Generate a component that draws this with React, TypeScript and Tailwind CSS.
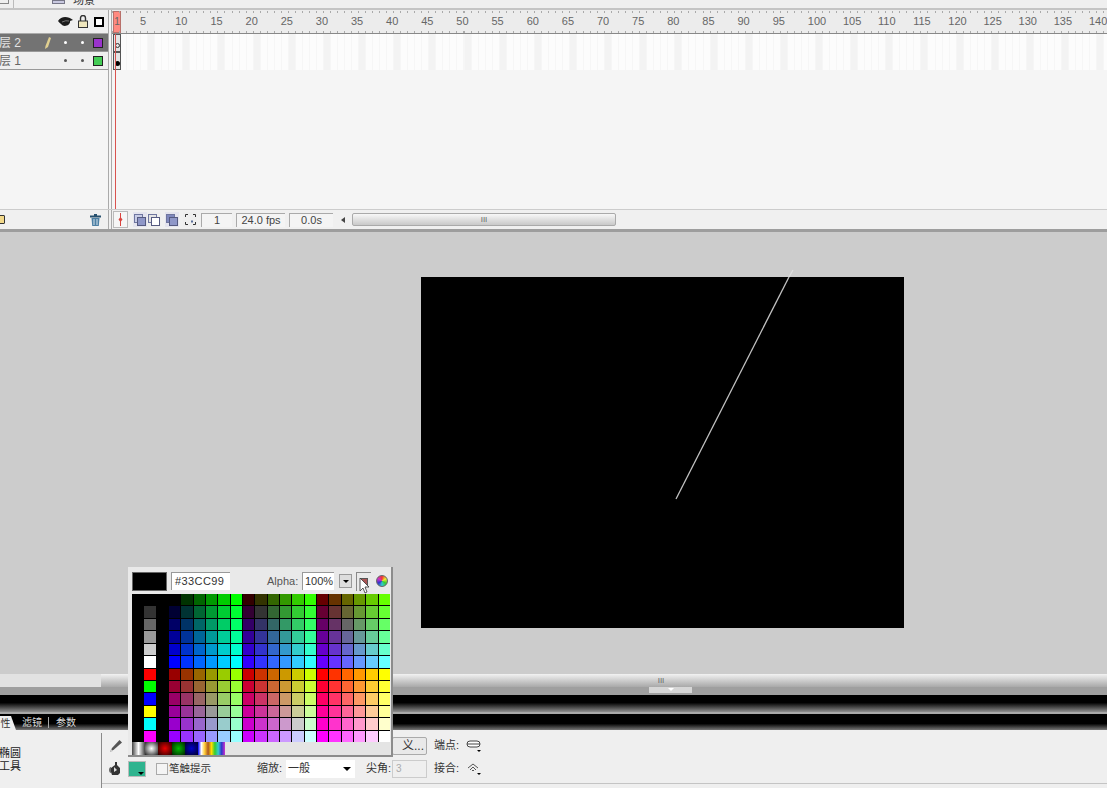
import React from 'react';

const hex = ['00', '33', '66', '99', 'CC', 'FF'];
const sideColors = ['#000000', '#333333', '#666666', '#999999', '#CCCCCC', '#FFFFFF', '#FF0000', '#00FF00', '#0000FF', '#FFFF00', '#00FFFF', '#FF00FF'];
const labels = [5, 10, 15, 20, 25, 30, 35, 40, 45, 50, 55, 60, 65, 70, 75, 80, 85, 90, 95, 100, 105, 110, 115, 120, 125, 130, 135, 140];

// web-safe palette, same order as the flash swatch panel
function swatches() {
  const cells: string[] = [];
  for (let row = 0; row < 12; row++) {
    const blue = hex[row % 6];
    cells.push('#000000', sideColors[row], '#000000');
    for (let col = 0; col < 18; col++) {
      const red = hex[Math.floor(col / 6) + (row < 6 ? 0 : 3)];
      cells.push(`#${red}${hex[col % 6]}${blue}`);
    }
  }
  return cells;
}

function Eye() {
  return (
    <svg width="15" height="10" viewBox="0 0 15 10">
      <path d="M0 4 C3 -1 10 -1 15 3 L12 4 C13 8 6 11 3 7 Q1.500 6 0 4Z" fill="#1c1c1c" />
      <path d="M4 5 Q8 3 11 4" fill="none" stroke="#8a8a8a" strokeWidth="0.8" />
    </svg>
  );
}

function Lock() {
  return (
    <svg width="10" height="13" viewBox="0 0 10 13">
      <path d="M2.500 7V3a2.500 2.500 0 0 1 5 0v4" fill="none" stroke="#333" strokeWidth="1.400" />
      <rect x="0.500" y="6" width="9" height="6.500" fill="#efe6bd" stroke="#333" />
    </svg>
  );
}

function Trash() {
  return (
    <svg width="11" height="12" viewBox="0 0 11 12">
      <rect x="0" y="1.500" width="11" height="2" fill="#26506e" />
      <rect x="4" y="0" width="3" height="2" fill="#26506e" />
      <path d="M1.500 4h8l-.7 8H2.200Z" fill="#4c7fa3" />
      <path d="M4 5v6M7 5v6" stroke="#d5e3ec" />
    </svg>
  );
}

function Onion({ back, front }: { back: string; front: string }) {
  return (
    <svg width="12" height="12" viewBox="0 0 12 12">
      <rect x="0.500" y="0.500" width="8" height="8" fill={back} stroke="#6f769f" />
      <rect x="3.500" y="3.500" width="8" height="8" fill={front} stroke="#555a80" />
    </svg>
  );
}

function TimelineHeader() {
  return (
    <div className="flex h-[24px] shrink-0">
      <div className="w-[108px] shrink-0 bg-[#efefef] flex items-center justify-end pr-[4px] border-b border-[#aaa]">
        <Eye />
        <div className="ml-[5px]">
          <Lock />
        </div>
        <div className="ml-[6px] w-[10px] h-[10px] border-2 border-black bg-white" />
      </div>
      <div className="w-[4px] shrink-0 bg-[#f5f5f5] border-x border-[#aaa]" />
      <div className="relative flex-1 bg-[#ececec] border-b border-[#888] overflow-hidden">
        <div className="absolute top-[1px] left-0 right-0 h-[2px] bg-[repeating-linear-gradient(90deg,#aaa_0,#aaa_1px,transparent_1px,transparent_7.03px)]" />
        <div className="absolute bottom-0 left-0 right-0 h-[2px] bg-[repeating-linear-gradient(90deg,#aaa_0,#aaa_1px,transparent_1px,transparent_7.03px)]" />
        <div className="flex h-full items-center text-[11px] text-[#666]">
          <div className="w-[28.1px] shrink-0 pl-[1px]">
            <div className="w-[8px] h-[22px] bg-[#ff8a80] border border-[#b8706a] text-center leading-[20px] text-[10px]">1</div>
          </div>
          {labels.map((n) => (
            <div key={n} className="w-[35.15px] shrink-0">{n}</div>
          ))}
        </div>
      </div>
    </div>
  );
}

function LayerRow({ name, color, active }: { name: string; color: string; active?: boolean }) {
  const dot = active ? 'bg-white' : 'bg-[#555]';
  return (
    <div className={`flex items-center h-[18px] border-b border-[#999] ${active ? 'bg-[#737373] text-[#e4e4e4]' : 'bg-[#efefef] text-[#666]'}`}>
      <span className="w-[46px] shrink-0 text-[12px] leading-none -ml-[1px] whitespace-nowrap">{name}</span>
      <div className="w-[10px] shrink-0">
        {active && (
          <svg width="6" height="12" viewBox="0 0 6 12">
            <path d="M4 0l2 1-3 9-3 2 .5-3Z" fill="#e0cf90" />
          </svg>
        )}
      </div>
      <span className={`ml-[9px] w-[3px] h-[3px] rounded-full ${dot}`} />
      <span className={`ml-[14px] w-[3px] h-[3px] rounded-full ${dot}`} />
      <span className="ml-[9px] w-[10px] h-[10px] border border-[#222]" style={{ backgroundColor: color }} />
    </div>
  );
}

function FrameRow({ children }: { children: React.ReactNode }) {
  return (
    <div className="flex h-[18px] bg-[repeating-linear-gradient(90deg,#f6f6f6_0,#f6f6f6_1px,transparent_1px,transparent_7.03px),repeating-linear-gradient(90deg,#f3f3f3_0,#f3f3f3_7px,#fcfcfc_7px,#fcfcfc_35.15px)]">
      <div className="w-[8px] ml-[1px] border border-[#555] bg-[#e4e4e4] flex items-end justify-center pb-[3px]">{children}</div>
    </div>
  );
}

function TimelineFooter() {
  const box = 'h-[14px] border-t border-l border-[#aaa] bg-[#f4f4f4] flex items-center justify-center text-[11px] text-[#444]';
  return (
    <div className="flex items-center h-[20px] shrink-0 bg-[#f0f0f0] border-t border-[#ccc]">
      <div className="w-[108px] shrink-0 flex items-center justify-between pr-[7px]">
        <div className="w-[6px] h-[9px] bg-[#f3d98a] border border-[#333] -ml-[1px] rounded-r-[1px]" />
        <Trash />
      </div>
      <div className="w-[4px] h-full shrink-0 border-x border-[#aaa]" />
      <div className="ml-[1px] w-[15px] h-[17px] border border-[#bbb] bg-[#f6f6f6] flex items-center justify-center">
        <svg width="5" height="13" viewBox="0 0 5 13">
          <path d="M2.500 0v13" stroke="#d9443f" />
          <path d="M2.500 4l2 2.500-2 2.500-2-2.500Z" fill="#d9443f" />
        </svg>
      </div>
      <div className="ml-[5px] w-[14px] h-[15px] bg-[#e4e4ee] flex items-center justify-center">
        <Onion back="#c9cde6" front="#8f97c8" />
      </div>
      <div className="w-[14px] h-[15px] bg-[#eee] flex items-center justify-center">
        <Onion back="#e4e4e4" front="#fff" />
      </div>
      <div className="ml-[4px] w-[14px] h-[15px] bg-[#e4e4ee] flex items-center justify-center">
        <Onion back="#7f88bd" front="#8f97c8" />
      </div>
      <div className="ml-[4px] w-[14px] h-[15px] bg-[#eee] flex items-center justify-center">
        <svg width="11" height="11" viewBox="0 0 11 11">
          <path d="M3 .5H.5V3M8 .5h2.500V3M3 10.500H.5V8M8 10.500h2.500V8" fill="none" stroke="#333" />
          <path d="M6 6.500h2v2H6Z" fill="#5a6f9a" />
        </svg>
      </div>
      <div className={`${box} ml-[4px] w-[31px]`}>1</div>
      <div className={`${box} ml-[4px] w-[49px]`}>24.0 fps</div>
      <div className={`${box} ml-[4px] w-[44px]`}>0.0s</div>
      <span className="ml-[8px] w-0 h-0 border-y-[3px] border-y-transparent border-r-[4px] border-r-[#444]" />
      <div className="ml-[7px] w-[264px] h-[13px] border border-[#aaa] rounded-[2px] bg-gradient-to-b from-[#f8f8f8] to-[#c9c9c9] flex items-center justify-center text-[8px] text-[#666] leading-none">III</div>
    </div>
  );
}

function Timeline() {
  return (
    <div className="shrink-0 h-[222px] flex flex-col bg-[#f5f5f5] border-b-[3px] border-[#9d9d9d]">
      <TimelineHeader />
      <div className="flex flex-1 relative">
        <div className="w-[108px] shrink-0">
          <LayerRow name="层 2" color="#9933cc" active />
          <LayerRow name="层 1" color="#44cc55" />
        </div>
        <div className="w-[4px] shrink-0 border-x border-[#aaa]" />
        <div className="flex-1">
          <FrameRow>
            <span className="w-[5px] h-[5px] rounded-full border border-[#333]" />
          </FrameRow>
          <FrameRow>
            <span className="w-[5px] h-[5px] rounded-full bg-black" />
          </FrameRow>
        </div>
        <div className="absolute left-[115px] top-0 bottom-0 w-px bg-[#d9534f]" />
      </div>
      <TimelineFooter />
    </div>
  );
}

function Stage() {
  return (
    <div className="relative flex-1 min-h-0 bg-[#cccccc] pl-[421px] pt-[45px]">
      <div className="w-[483px] h-[351px] bg-black" />
      <svg className="absolute left-[670px] top-[35px]" width="130" height="235" viewBox="0 0 130 235">
        {/* the stroke runs a little past the stage's top edge */}
        <line x1="123" y1="3" x2="119" y2="10" stroke="#dedede" strokeWidth="1.3" />
        <line x1="119" y1="10" x2="6" y2="232" stroke="#c2c2c2" strokeWidth="1.3" />
      </svg>
    </div>
  );
}

function StageBars() {
  return (
    <div className="shrink-0">
      <div className="flex h-[13px]">
        <div className="w-[101px] bg-[#e2e2e2]" />
        <div className="flex-1 bg-gradient-to-b from-[#f2f2f2] to-[#a9a9a9] flex items-center justify-center pl-[114px] text-[8px] text-[#666] leading-none">III</div>
      </div>
      <div className="h-[8px] bg-[#9f9f9f] flex justify-end pr-[415px]">
        <div className="w-[43px] h-[6px] bg-[#d6d6d6] flex justify-center">
          <span className="w-0 h-0 border-x-[3px] border-x-transparent border-t-[3px] border-t-white mt-[1px]" />
        </div>
      </div>
      <div className="h-[17px] bg-[linear-gradient(180deg,#000_0,#000_45%,#8f8f8f_100%)]" />
      <div className="h-[2px] bg-[#a8a8a8]" />
      <div className="flex h-[16px] bg-[linear-gradient(180deg,#000_0,#000_60%,#777_100%)] items-end text-[10px] leading-[15px] text-[#ddd]">
        <div className="w-[11px] h-[14px] bg-[#efefef] text-[#333] text-center">性</div>
        <div className="w-0 h-0 border-b-[14px] border-b-[#efefef] border-r-[5px] border-r-transparent" />
        <span className="ml-[6px]">滤镜</span>
        <span className="ml-[6px] h-[11px] w-px bg-[#aaa] mb-[2px]" />
        <span className="ml-[7px]">参数</span>
      </div>
    </div>
  );
}

function Panel() {
  return (
    <div className="h-[58px] shrink-0 bg-[#efefef] flex text-[11px] text-[#333] whitespace-nowrap">
      <div className="w-[102px] shrink-0 pt-[17px] leading-[13px] text-[#222] relative">
        <div className="-ml-[1px]">椭圆</div>
        <div className="-ml-[1px]">工具</div>
        <div className="absolute right-0 top-[3px] bottom-0 w-px bg-[#8a8a8a]" />
      </div>
      <div className="flex-1 flex flex-col relative">
        <div className="flex items-center h-[17px] mt-[7px]">
          <svg className="ml-[8px]" width="12" height="12" viewBox="0 0 12 12">
            <path d="M9.500 0l2.500 2.500-8 7-4 2.500 2-4Z" fill="#555" />
            <path d="M0 12l1-3 2 2Z" fill="#ccc" />
          </svg>
          <div className="ml-[270px] w-[35px] h-[18px] bg-[#e9e9e9] border border-[#aaa] rounded-[2px] flex items-center justify-end pr-[2px] text-[12px]">义...</div>
          <span className="ml-[7px] w-[27px]">端点:</span>
          <svg className="ml-[5px]" width="16" height="14" viewBox="0 0 16 14">
            <rect x="1" y="2" width="13" height="6" rx="3" fill="#fff" stroke="#444" />
            <path d="M1 5h13" stroke="#444" />
            <path d="M11 11h4l-2 2Z" fill="#000" />
          </svg>
        </div>
        <div className="flex items-center h-[17px] mt-[6px]">
          <svg className="ml-[7px]" width="13" height="13" viewBox="0 0 13 13">
            <path d="M6 0h2v3l3 3v5l-2 2H3l-1-3V6l4-3Z" fill="#333" />
            <path d="M0 8c0-2 1-3 2-3v6C1 11 0 10 0 8Z" fill="#666" />
            <path d="M5 5l3 3-3 2Z" fill="#ddd" />
          </svg>
          <div className="ml-[6px] w-[18px] h-[16px] bg-[#2fb48f] border border-[#bbb] relative">
            <span className="absolute right-[1px] bottom-[1px] w-0 h-0 border-x-[3px] border-x-transparent border-t-[3px] border-t-black" />
          </div>
          <div className="ml-[10px] w-[12px] h-[12px] border border-[#aaa] bg-[#f4f4f4]" />
          <span className="ml-[1px] w-[43px] text-[10.500px]">笔触提示</span>
          <span className="ml-[45px] w-[26px]">缩放:</span>
          <div className="ml-[3px] w-[69px] h-[18px] bg-white flex items-center justify-between pl-[2px] pr-[4px]">
            <span>一般</span>
            <span className="w-0 h-0 border-x-[4px] border-x-transparent border-t-[4px] border-t-black" />
          </div>
          <span className="ml-[11px] w-[25px]">尖角:</span>
          <div className="w-[35px] h-[18px] border border-[#ccc] text-[#aaa] text-[10px] pl-[3px] leading-[16px] ml-[1px]">3</div>
          <span className="ml-[7px] w-[27px]">接合:</span>
          <svg className="ml-[5px]" width="16" height="14" viewBox="0 0 16 14">
            <path d="M2 6l5-4 5 4M4 8l3-3 3 3M6 9l1-1 1 1" fill="none" stroke="#555" />
            <path d="M11 11h4l-2 2Z" fill="#000" />
          </svg>
        </div>
        <div className="absolute left-0 right-0 top-[53px] h-px bg-[#c4c4c4]" />
      </div>
    </div>
  );
}

function ColorPopup() {
  return (
    <div className="absolute left-[128px] top-[567px] w-[265px] h-[190px] bg-[#e9e9e9] border-r-2 border-b-2 border-[#8c8c8c] pl-[4px] pt-[4px] text-[11px] text-[#555]">
      <div className="flex items-center h-[20px]">
        <div className="w-[35px] h-[19px] bg-black border border-[#666]" />
        <div className="ml-[4px] w-[59px] h-[18px] bg-white border-t border-l border-[#999] pl-[3px] leading-[17px] text-[#333] tracking-[0.4px]">#33CC99</div>
        <span className="ml-[37px] w-[33px]">Alpha:</span>
        <div className="ml-[2px] w-[32px] h-[18px] bg-white border-t border-l border-[#999] pl-[2px] leading-[17px] text-[#333]">100%</div>
        <div className="ml-[5px] w-[13px] h-[14px] bg-[#ddd] border border-[#999] flex items-center justify-center">
          <span className="w-0 h-0 border-x-[3px] border-x-transparent border-t-[3px] border-t-black" />
        </div>
        <div className="ml-[4px] w-[15px] h-[19px] border-t border-l border-[#888] flex items-center justify-center">
          <span className="w-[8px] h-[8px] bg-[#a55] border border-[#555]" />
        </div>
        <span className="ml-[5px] w-[12px] h-[12px] rounded-full bg-[conic-gradient(#e33,#ee3,#3c3,#3cc,#33c,#c3c,#e33)] border border-[#666]" />
      </div>
      <div className="mt-[3px] w-[258px] h-[148px] grid grid-cols-[repeat(21,1fr)] grid-rows-[repeat(12,1fr)] gap-px bg-black">
        {swatches().map((c, i) => (
          <div key={i} style={{ backgroundColor: c }} />
        ))}
      </div>
      <div className="flex w-[258px] h-[13px] bg-[#e4e4e4]">
        <div className="w-[13px] bg-[linear-gradient(90deg,#444,#fff,#444)]" />
        <div className="w-[13px] bg-[radial-gradient(circle,#fff,#222)]" />
        <div className="w-[14px] bg-[radial-gradient(circle,#e00,#200)]" />
        <div className="w-[13px] bg-[radial-gradient(circle,#0b0,#020)]" />
        <div className="w-[13px] bg-[radial-gradient(circle,#00c,#002)]" />
        <div className="w-[27px] bg-[linear-gradient(90deg,#00f,#fff,#fc3,#a52,#fd0,#3c3,#3cc,#33c,#c3c)]" />
      </div>
      <svg className="absolute left-[231px] top-[10px]" width="13" height="18" viewBox="0 0 13 18">
        <path d="M1 1v13l3-3 2 5 2-1-2-5h4Z" fill="#fff" stroke="#333" strokeWidth="0.8" />
      </svg>
    </div>
  );
}

export default function App() {
  return (
    <div
      className="relative w-[1107px] h-[788px] overflow-hidden flex flex-col bg-[#ccc]"
      style={{ fontFamily: '"Liberation Sans", "Noto Sans CJK SC", sans-serif' }}
    >
      {/* top toolbar, mostly cut off */}
      <div className="h-[10px] shrink-0 bg-[#efefef] border-b-2 border-[#c4c4c4] flex items-start overflow-hidden">
        <div className="w-[9px] h-[4px] border-r border-b border-[#888]" />
        <div className="ml-[4px] h-[8px] w-px bg-[#bbb]" />
        <div className="ml-[38px] w-[13px] h-[4px] bg-[#c9c9e0] border border-[#778]" />
        <span className="ml-[8px] text-[11px] leading-[0px] text-[#333]">场景</span>
      </div>
      <Timeline />
      <Stage />
      <StageBars />
      <Panel />
      <ColorPopup />
    </div>
  );
}
